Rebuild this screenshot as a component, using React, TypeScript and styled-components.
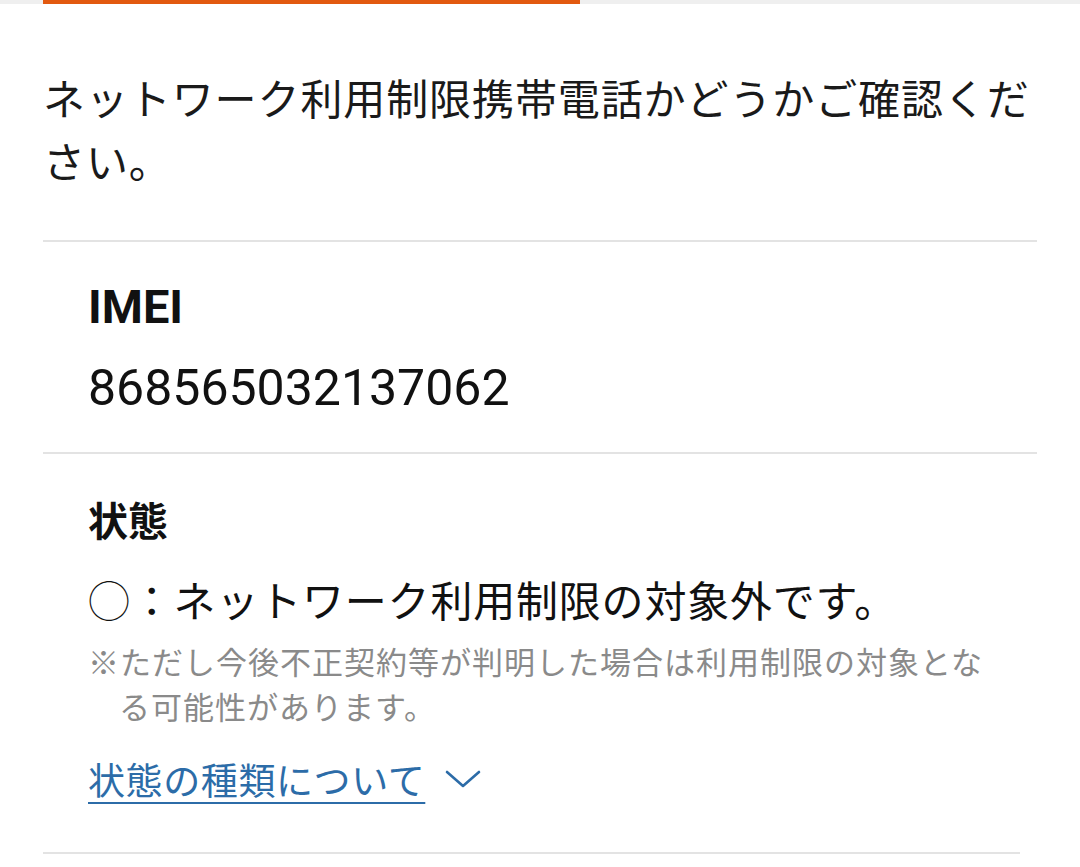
import React from "react";
import styled, { createGlobalStyle } from "styled-components";

const GlobalStyle = createGlobalStyle`
  html, body {
    margin: 0;
    padding: 0;
    background: #ffffff;
  }
  body {
    font-family: "Noto Sans CJK JP", "Noto Sans", sans-serif;
    color: #1a1a1a;
    -webkit-font-smoothing: antialiased;
  }
`;

const Page = styled.div`
  width: 1080px;
  min-height: 867px;
  background: #ffffff;
  overflow: hidden;
`;

const TabTrack = styled.div`
  display: flex;
  height: 4px;
  background: #efefef;
`;

const TabIndicator = styled.div`
  margin-left: 43px;
  width: 537px;
  height: 4px;
  background: #e2590f;
`;

const Content = styled.div`
  padding: 0 43px;
`;

const Intro = styled.p`
  margin: 0;
  padding: 61px 0 49px;
  font-size: 42px;
  line-height: 63px;
  letter-spacing: 0.9px;
  font-weight: 400;
`;

const Section = styled.section<{ $bottom: number; $trim?: number }>`
  border-top: 2px solid #e3e3e3;
  margin-right: ${(p) => p.$trim ?? 0}px;
  padding: 35px 45px ${(p) => p.$bottom}px;
  display: flex;
  flex-direction: column;
  align-items: flex-start;
`;

const Heading = styled.h2<{ $latin?: boolean }>`
  margin: 0;
  font-family: ${(p) =>
    p.$latin
      ? `Roboto, "Noto Sans CJK JP", sans-serif`
      : `"Noto Sans CJK JP", sans-serif`};
  font-size: ${(p) => (p.$latin ? 47 : 40)}px;
  line-height: 60px;
  font-weight: 700;
  color: #111111;
`;

const Value = styled.div`
  margin-top: 21px;
  font-family: Roboto, "Noto Sans CJK JP", sans-serif;
  font-size: 50px;
  line-height: 60px;
  font-weight: 400;
  color: #111111;
`;

const Status = styled.div`
  margin-top: 20px;
  font-size: 42px;
  line-height: 60px;
  letter-spacing: 0.8px;
  color: #111111;
`;

const Mark = styled.span`
  font-weight: 300;
`;

const Note = styled.p`
  margin: 9px 0 0;
  font-size: 31px;
  line-height: 45px;
  letter-spacing: 1px;
  color: #8a8a8a;
  padding-left: 1em;
  text-indent: -1em;
`;

const LinkRow = styled.div`
  margin-top: 26px;
  display: flex;
  align-items: center;
  gap: 20px;
  height: 50px;
`;

const InfoLink = styled.a`
  font-size: 37px;
  line-height: 50px;
  letter-spacing: 0.6px;
  color: #2c6ca8;
  text-decoration: underline;
  text-decoration-thickness: 2px;
  text-underline-offset: 7px;
  cursor: pointer;
`;

const Chevron = styled.svg`
  width: 36px;
  height: 20px;
  display: block;
`;

export default function App() {
  return (
    <Page>
      <GlobalStyle />
      <TabTrack>
        <TabIndicator />
      </TabTrack>
      <Content>
        <Intro>ネットワーク利用制限携帯電話かどうかご確認ください。</Intro>
        <Section $bottom={34}>
          <Heading $latin>IMEI</Heading>
          <Value>868565032137062</Value>
        </Section>
        <Section $bottom={48}>
          <Heading>状態</Heading>
          <Status>
            <Mark>◯</Mark>：ネットワーク利用制限の対象外です。
          </Status>
          <Note>
            ※ただし今後不正契約等が判明した場合は利用制限の対象となる可能性があります。
          </Note>
          <LinkRow>
            <InfoLink>状態の種類について</InfoLink>
            <Chevron viewBox="0 0 36 20" fill="none">
              <polyline
                points="2,3 18,17 34,3"
                stroke="#2c6ca8"
                strokeWidth="2.6"
                strokeLinecap="round"
                strokeLinejoin="round"
              />
            </Chevron>
          </LinkRow>
        </Section>
        <Section $bottom={0} $trim={17} />
      </Content>
    </Page>
  );
}
